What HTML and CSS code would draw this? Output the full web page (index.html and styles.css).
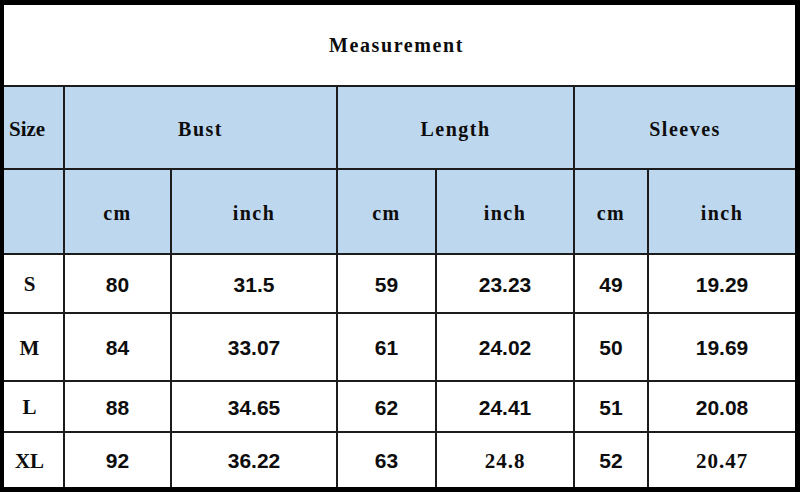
FILE: index.html
```html
<!DOCTYPE html>
<html>
<head>
<meta charset="utf-8">
<link rel="stylesheet" href="styles.css">
</head>
<body>
<div class="chart">
  <div class="cell title">Measurement</div>

  <div class="cell head size-head">Size</div>
  <div class="cell head span2">Bust</div>
  <div class="cell head span2">Length</div>
  <div class="cell head span2">Sleeves</div>

  <div class="cell head"></div>
  <div class="cell head">cm</div>
  <div class="cell head">inch</div>
  <div class="cell head">cm</div>
  <div class="cell head">inch</div>
  <div class="cell head">cm</div>
  <div class="cell head">inch</div>

  <div class="cell size">S</div>
  <div class="cell num">80</div>
  <div class="cell num">31.5</div>
  <div class="cell num">59</div>
  <div class="cell num">23.23</div>
  <div class="cell num">49</div>
  <div class="cell num">19.29</div>

  <div class="cell size">M</div>
  <div class="cell num">84</div>
  <div class="cell num">33.07</div>
  <div class="cell num">61</div>
  <div class="cell num">24.02</div>
  <div class="cell num">50</div>
  <div class="cell num">19.69</div>

  <div class="cell size">L</div>
  <div class="cell num">88</div>
  <div class="cell num">34.65</div>
  <div class="cell num">62</div>
  <div class="cell num">24.41</div>
  <div class="cell num">51</div>
  <div class="cell num">20.08</div>

  <div class="cell size">XL</div>
  <div class="cell num">92</div>
  <div class="cell num">36.22</div>
  <div class="cell num">63</div>
  <div class="cell num serif">24.8</div>
  <div class="cell num">52</div>
  <div class="cell num serif">20.47</div>
</div>
</body>
</html>
```
FILE: styles.css
```css
html, body {
  margin: 0;
  padding: 0;
  background: #ffffff;
}

.chart {
  box-sizing: border-box;
  width: 800px;
  height: 492px;
  border-style: solid;
  border-color: #000000;
  border-width: 5px 5px 5px 4px;
  background: #1c1c1c;
  display: grid;
  grid-template-columns: 59px 105px 164px 97px 136px 72px 146px;
  grid-template-rows: 80px 81px 83px 57px 66px 49px 54px;
  gap: 2px;
  color: #0d0d0d;
}

.cell {
  background: #ffffff;
  display: flex;
  align-items: center;
  justify-content: center;
  font-family: "Liberation Serif", "Times New Roman", serif;
  font-weight: bold;
  font-size: 20px;
  letter-spacing: 1.5px;
}

.title {
  grid-column: 1 / -1;
  padding-top: 1px;
  padding-right: 6px;
  letter-spacing: 1.6px;
}

.head {
  background: #bdd7ee;
  padding-top: 3px;
}

.span2 {
  grid-column: span 2;
}

.size-head {
  justify-content: flex-start;
  padding-left: 5px;
  font-size: 21px;
  letter-spacing: 0;
}

.size {
  font-size: 21px;
  letter-spacing: 0;
  padding-right: 8px;
  padding-top: 2px;
}

.num {
  font-family: "Liberation Sans", Arial, sans-serif;
  font-size: 21px;
  letter-spacing: 0;
  padding-top: 2px;
}

.num.serif {
  font-family: "Liberation Serif", "Times New Roman", serif;
  letter-spacing: 1px;
}
```
